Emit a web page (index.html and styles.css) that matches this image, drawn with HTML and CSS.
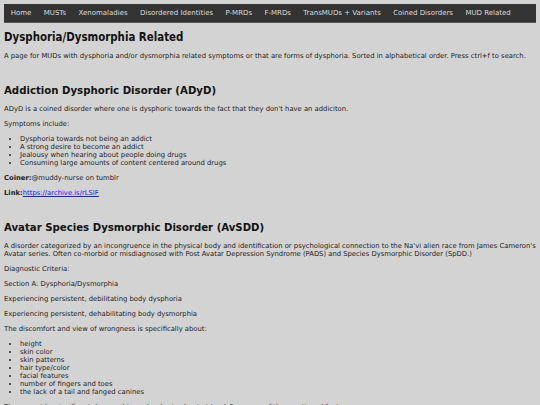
FILE: index.html
```html
<!DOCTYPE html>
<html lang="en">
<head>
<meta charset="utf-8">
<title>Dysphoria/Dysmorphia Related</title>
<link rel="stylesheet" href="styles.css">
</head>
<body>
<nav class="topnav">
  <a href="#">Home</a>
  <a href="#">MUSTs</a>
  <a href="#">Xenomaladies</a>
  <a href="#">Disordered Identities</a>
  <a href="#">P-MRDs</a>
  <a href="#">F-MRDs</a>
  <a href="#">TransMUDs + Variants</a>
  <a href="#">Coined Disorders</a>
  <a href="#">MUD Related</a>
</nav>
<main class="content">
  <h1 class="page-title">Dysphoria/Dysmorphia Related</h1>
  <p>A page for MUDs with dysphoria and/or dysmorphia related symptoms or that are forms of dysphoria. Sorted in alphabetical order. Press ctrl+f to search.</p>
  <br>
  <h2 class="entry-title">Addiction Dysphoric Disorder (ADyD)</h2>
  <p>ADyD is a coined disorder where one is dysphoric towards the fact that they don't have an addiciton.</p>
  <p>Symptoms include:</p>
  <ul>
    <li>Dysphoria towards not being an addict</li>
    <li>A strong desire to become an addict</li>
    <li>Jealousy when hearing about people doing drugs</li>
    <li>Consuming large amounts of content centered around drugs</li>
  </ul>
  <p><b>Coiner:</b>@muddy-nurse on tumblr</p>
  <p><b>Link:</b><a href="#">https://archive.is/rLSIF</a></p>
  <br>
  <h2 class="entry-title">Avatar Species Dysmorphic Disorder (AvSDD)</h2>
  <p>A disorder categorized by an incongruence in the physical body and identification or psychological connection to the Na'vi alien race from James Cameron's Avatar series. Often co-morbid or misdiagnosed with Post Avatar Depression Syndrome (PADS) and Species Dysmorphic Disorder (SpDD.)</p>
  <p>Diagnostic Criteria:</p>
  <p>Section A: Dysphoria/Dysmorphia</p>
  <p>Experiencing persistent, debilitating body dysphoria</p>
  <p>Experiencing persistent, dehabilitating body dysmorphia</p>
  <p>The discomfort and view of wrongness is specifically about:</p>
  <ul>
    <li>height</li>
    <li>skin color</li>
    <li>skin patterns</li>
    <li>hair type/color</li>
    <li>facial features</li>
    <li>number of fingers and toes</li>
    <li>the lack of a tail and fanged canines</li>
  </ul>
  <p>There must be significant dysmorphia or dysphoria about at least 3 or more of the mentioned features.</p>
</main>
</body>
</html>
```

FILE: styles.css
```css
html {
  background: #d3d3d3;
}
body {
  margin: 4px;
  font-family: "DejaVu Sans", sans-serif;
  font-size: 6.8px;
  line-height: 8px;
  color: #222;
}
.topnav {
  display: flex;
  margin: -1px -1px 0;
  padding: 0 0.5px;
  background: #333;
  border: 1px solid #555;
  height: 18px;
  align-items: center;
}
.topnav a {
  color: #ddd;
  text-decoration: none;
  padding: 0 6.2px;
  font-size: 7px;
}
.content br {
  display: block;
  content: "";
  height: 8px;
}
.page-title {
  font-family: "DejaVu Sans Condensed", "DejaVu Sans", sans-serif;
  font-size: 11.4px;
  line-height: 14px;
  margin: 7px 0 8px;
  color: #111;
}
.entry-title {
  font-family: "DejaVu Sans Condensed", "DejaVu Sans", sans-serif;
  font-size: 11.3px;
  line-height: 14px;
  margin: 9px 0 5px;
  color: #111;
}
p {
  margin: 7px 0;
}
ul {
  margin: 7px 0;
  padding-left: 16px;
}
a {
  color: #1a1aee;
}
```
